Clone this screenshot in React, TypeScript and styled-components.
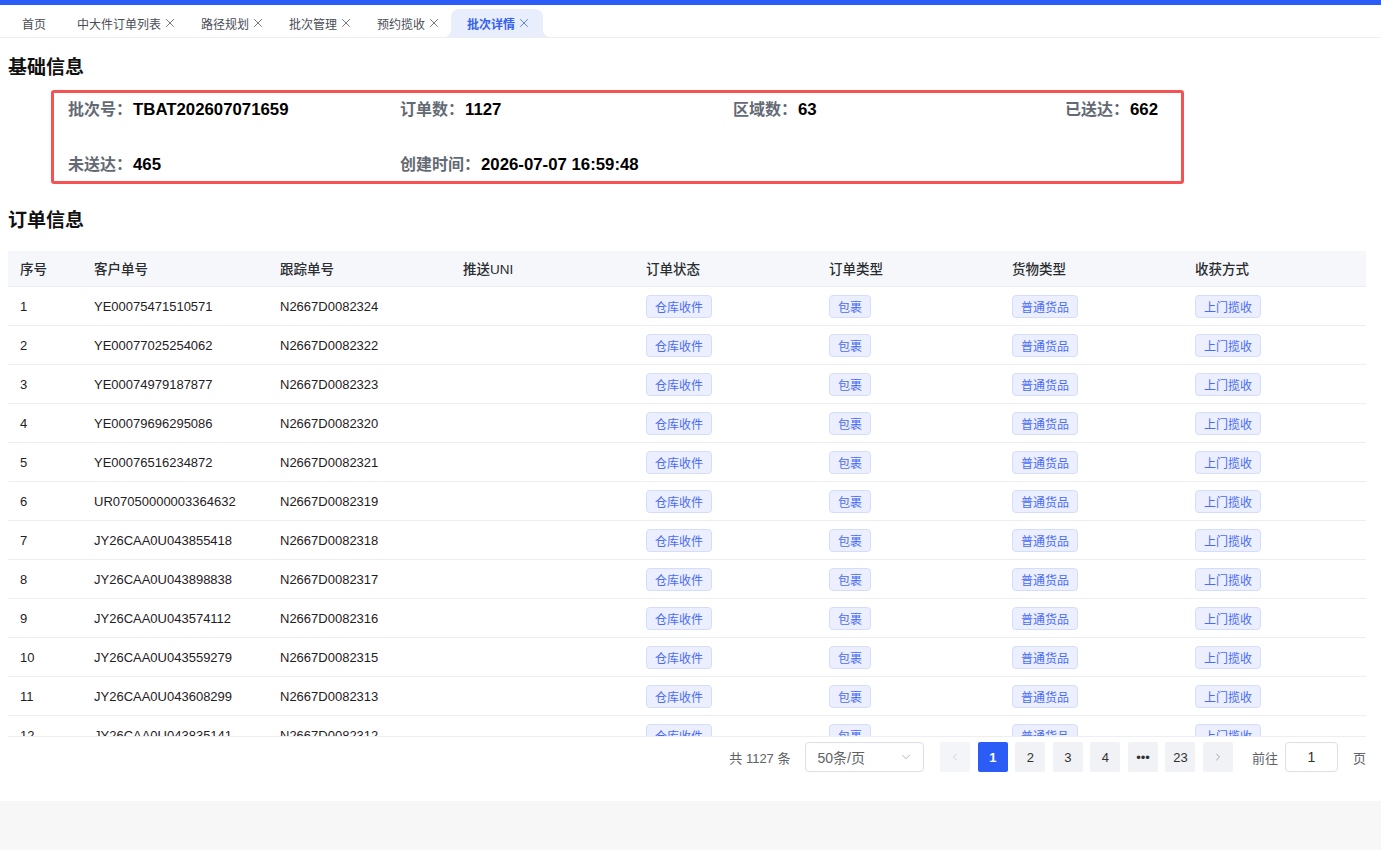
import React from "react";
import styled, { createGlobalStyle } from "styled-components";
import { X, ChevronLeft, ChevronRight, ChevronDown } from "lucide-react";

const FONT = `"Liberation Sans", "Noto Sans CJK SC", Arial, sans-serif`;

const GlobalStyle = createGlobalStyle`
  html, body { margin: 0; padding: 0; background: #f7f7f7; }
  body { font-family: ${FONT}; color: #303133; }
  * { box-sizing: border-box; }
`;

const Page = styled.div`
  background: #fff;
  height: 801px;
  display: flex;
  flex-direction: column;
`;

const TopBar = styled.div`
  height: 5px;
  background: #2c5cf6;
`;

const TabBar = styled.div`
  height: 33px;
  display: flex;
  align-items: flex-end;
  padding-left: 8px;
  border-bottom: 1px solid #eceef2;
`;

const Tab = styled.div<{ $active?: boolean; $first?: boolean }>`
  position: relative;
  height: 28px;
  display: flex;
  align-items: center;
  padding: 0 ${(p) => (p.$first ? "17px" : p.$active ? "12px" : "10px")} 0
    ${(p) => (p.$active ? "16px" : "14px")};
  font-size: 12px;
  color: ${(p) => (p.$active ? "#3560f0" : "#4a4d55")};
  font-weight: ${(p) => (p.$active ? 700 : 400)};
  background: ${(p) => (p.$active ? "#e9eefd" : "transparent")};
  border-radius: 8px 8px 0 0;
  white-space: nowrap;
  ${(p) =>
    p.$active &&
    `
    &::before, &::after {
      content: "";
      position: absolute;
      bottom: 0;
      width: 8px;
      height: 8px;
    }
    &::before {
      left: -8px;
      background: radial-gradient(circle at 0 0, transparent 8px, #e9eefd 8.5px);
    }
    &::after {
      right: -8px;
      background: radial-gradient(circle at 100% 0, transparent 8px, #e9eefd 8.5px);
    }
  `}
`;

const TabClose = styled.span`
  display: inline-flex;
  margin-left: 2px;
  width: 14px;
  color: inherit;
`;

const Content = styled.div`
  padding: 0 15px 0 8px;
  display: flex;
  flex-direction: column;
  flex: 1;
`;

const SectionTitle = styled.h2<{ $top: number }>`
  margin: ${(p) => p.$top}px 0 0;
  font-size: 19px;
  line-height: 26px;
  font-weight: 700;
  color: #111;
  font-family: ${FONT};
`;

const InfoBox = styled.div`
  margin: 9px 0 0 43px;
  width: 1133px;
  height: 94px;
  border: 3px solid #f55353;
  border-radius: 3px;
  padding: 6px 14px 5px 14px;
  display: grid;
  grid-template-columns: 332px 333px 332px auto;
  row-gap: 33px;
  align-content: start;
`;

const InfoItem = styled.div`
  font-size: 16px;
  line-height: 22px;
  font-weight: 700;
  white-space: nowrap;
`;

const InfoLabel = styled.span`
  color: #646a74;
`;

const InfoValue = styled.span`
  color: #000;
  font-size: 16.8px;
  margin-left: 1px;
`;

const Table = styled.div`
  margin-top: 17px;
  width: 1358px;
`;

const COLS = "74px 186px 183px 183px 183px 183px 183px 183px";

const HeaderRow = styled.div`
  display: grid;
  grid-template-columns: ${COLS};
  height: 36px;
  background: #f5f7fa;
  border-bottom: 1px solid #ebeef5;
  align-items: center;
  padding-bottom: 2px;
`;

const HeadCell = styled.div`
  padding: 0 12px;
  font-size: 13.5px;
  font-weight: 500;
  color: #2a2c30;
  white-space: nowrap;
`;

const Body = styled.div`
  height: 450px;
  overflow: hidden;
  border-bottom: 1px solid #ebeef5;
`;

const Row = styled.div`
  display: grid;
  grid-template-columns: ${COLS};
  height: 39px;
  border-bottom: 1px solid #ebeef5;
  align-items: center;
`;

const Cell = styled.div`
  padding: 0 12px;
  font-size: 13px;
  color: #1f2024;
  white-space: nowrap;
`;

const TagEl = styled.span`
  display: inline-flex;
  align-items: center;
  height: 23px;
  padding: 0 8px;
  font-size: 12px;
  color: #4a6cf4;
  background: #ebefff;
  border: 1px solid #d5ddfc;
  border-radius: 4px;
`;

const Pager = styled.div`
  margin-top: 5px;
  width: 1358px;
  height: 30px;
  display: flex;
  justify-content: flex-end;
  align-items: center;
  font-size: 14px;
  color: #606266;
`;

const Total = styled.span`
  font-size: 13px;
  margin-right: 15px;
`;

const Select = styled.div`
  width: 119px;
  height: 30px;
  border: 1px solid #dcdfe6;
  border-radius: 4px;
  display: flex;
  align-items: center;
  justify-content: space-between;
  padding: 0 10px 0 11px;
  color: #606266;
  margin-right: 16px;
`;

const Pages = styled.div`
  display: flex;
  gap: 7.5px;
`;

const PageBtn = styled.div<{ $active?: boolean; $disabled?: boolean }>`
  width: 30px;
  height: 30px;
  border-radius: 2px;
  display: flex;
  align-items: center;
  justify-content: center;
  font-size: 13px;
  font-weight: ${(p) => (p.$active ? 700 : 400)};
  color: ${(p) => (p.$active ? "#fff" : p.$disabled ? "#c0c4cc" : "#303133")};
  background: ${(p) => (p.$active ? "#2c5cf6" : p.$disabled ? "#f4f5f8" : "#f0f2f5")};
`;

const Jump = styled.span`
  margin-left: 19px;
  display: flex;
  align-items: center;
  gap: 7px;
  font-size: 13px;
`;

const JumpInput = styled.div`
  width: 53px;
  height: 30px;
  border: 1px solid #dcdfe6;
  border-radius: 4px;
  display: flex;
  align-items: center;
  justify-content: center;
  color: #303133;
  font-size: 14px;
  margin-right: 8px;
`;

const tabs = ["中大件订单列表", "路径规划", "批次管理", "预约揽收"];

const rows: [string, string][] = [
  ["YE00075471510571", "N2667D0082324"],
  ["YE00077025254062", "N2667D0082322"],
  ["YE00074979187877", "N2667D0082323"],
  ["YE00079696295086", "N2667D0082320"],
  ["YE00076516234872", "N2667D0082321"],
  ["UR07050000003364632", "N2667D0082319"],
  ["JY26CAA0U043855418", "N2667D0082318"],
  ["JY26CAA0U043898838", "N2667D0082317"],
  ["JY26CAA0U043574112", "N2667D0082316"],
  ["JY26CAA0U043559279", "N2667D0082315"],
  ["JY26CAA0U043608299", "N2667D0082313"],
  ["JY26CAA0U043835141", "N2667D0082312"],
];

const headers = ["序号", "客户单号", "跟踪单号", "推送UNI", "订单状态", "订单类型", "货物类型", "收获方式"];

const info: [string, string][] = [
  ["批次号：", "TBAT202607071659"],
  ["订单数：", "1127"],
  ["区域数：", "63"],
  ["已送达：", "662"],
  ["未送达：", "465"],
  ["创建时间：", "2026-07-07 16:59:48"],
];

export default function App() {
  return (
    <>
      <GlobalStyle />
      <Page>
        <TopBar />
        <TabBar>
          <Tab $first>首页</Tab>
          {tabs.map((t) => (
            <Tab key={t}>
              {t}
              <TabClose>
                <X size={14} strokeWidth={1.3} />
              </TabClose>
            </Tab>
          ))}
          <Tab $active>
            批次详情
            <TabClose>
              <X size={14} strokeWidth={1.3} />
            </TabClose>
          </Tab>
        </TabBar>
        <Content>
          <SectionTitle $top={17}>基础信息</SectionTitle>
          <InfoBox>
            {info.map(([l, v]) => (
              <InfoItem key={l}>
                <InfoLabel>{l}</InfoLabel>
                <InfoValue>{v}</InfoValue>
              </InfoItem>
            ))}
          </InfoBox>
          <SectionTitle $top={24}>订单信息</SectionTitle>
          <Table>
            <HeaderRow>
              {headers.map((h) => (
                <HeadCell key={h}>{h}</HeadCell>
              ))}
            </HeaderRow>
            <Body>
              {rows.map(([c, t], i) => (
                <Row key={c}>
                  <Cell>{i + 1}</Cell>
                  <Cell>{c}</Cell>
                  <Cell>{t}</Cell>
                  <Cell></Cell>
                  <Cell>
                    <TagEl>仓库收件</TagEl>
                  </Cell>
                  <Cell>
                    <TagEl>包裹</TagEl>
                  </Cell>
                  <Cell>
                    <TagEl>普通货品</TagEl>
                  </Cell>
                  <Cell>
                    <TagEl>上门揽收</TagEl>
                  </Cell>
                </Row>
              ))}
            </Body>
          </Table>
          <Pager>
            <Total>共 1127 条</Total>
            <Select>
              <span>50条/页</span>
              <ChevronDown size={14} color="#a8abb2" strokeWidth={1.5} />
            </Select>
            <Pages>
              <PageBtn $disabled>
                <ChevronLeft size={12} strokeWidth={1.5} />
              </PageBtn>
              <PageBtn $active>1</PageBtn>
              <PageBtn>2</PageBtn>
              <PageBtn>3</PageBtn>
              <PageBtn>4</PageBtn>
              <PageBtn>•••</PageBtn>
              <PageBtn>23</PageBtn>
              <PageBtn>
                <ChevronRight size={12} strokeWidth={1.5} color="#8a8d94" />
              </PageBtn>
            </Pages>
            <Jump>
              前往
              <JumpInput>1</JumpInput>
              页
            </Jump>
          </Pager>
        </Content>
      </Page>
    </>
  );
}
